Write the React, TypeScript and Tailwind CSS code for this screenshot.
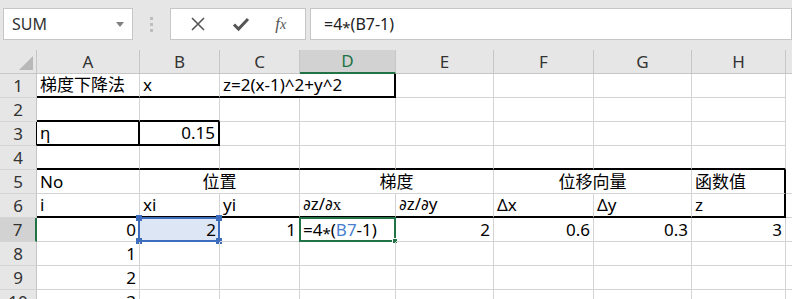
import React from 'react';

const FONT = '[font-family:"Noto_Sans","Noto_Sans_CJK_SC",sans-serif]';

type CellProps = {
  w: string;
  right?: boolean;
  center?: boolean;
  className?: string;
  children?: React.ReactNode;
};

function Cell({ w, right, center, className = '', children }: CellProps) {
  return (
    <div
      className={`${w} relative h-full shrink-0 border-r border-b border-[#d4d4d4] flex items-end px-[3px] pb-[1px] leading-[20px] whitespace-nowrap text-[17px] text-black ${
        right ? 'justify-end' : center ? 'justify-center' : 'justify-start'
      } ${className}`}
    >
      {children}
    </div>
  );
}

function RowHead({ n, active, className = '' }: { n: number; active?: boolean; className?: string }) {
  return (
    <div
      className={`w-[37px] h-full shrink-0 flex items-center justify-center text-[17px] text-[#333] border-b border-[#d4d4d4] ${
        active ? 'bg-[#d2d2d2] border-r-2 border-r-[#217346]' : 'bg-[#e6e6e6] border-r border-r-[#c6c6c6]'
      } ${className}`}
    >
      {n}
    </div>
  );
}

function Row({ children }: { children: React.ReactNode }) {
  return <div className="flex h-[24px] bg-white">{children}</div>;
}

const A = 'w-[103px]';
const B = 'w-[80px]';
const C = 'w-[80px]';
const D = 'w-[96px]';
const E = 'w-[98px]';
const F = 'w-[100px]';
const G = 'w-[98px]';
const H = 'w-[94px]';
const I = 'w-[30px]';

const THICK_B = 'border-b-2 border-b-black';
const THICK_R = 'border-r-2 border-r-black';

function EmptyRest({ from = 0, bottom = '' }: { from?: number; bottom?: string }) {
  const cols = [A, B, C, D, E, F, G, H];
  return (
    <>
      {cols.slice(from).map((c, i) => (
        <Cell key={i} w={c} className={bottom} />
      ))}
    </>
  );
}

function Handle({ className }: { className: string }) {
  return <div className={`absolute w-[6px] h-[6px] ${className}`} />;
}

// low-set asterisk the way the sheet font draws it
function Star() {
  return <span className="inline-block translate-y-[3px] text-[15px]">*</span>;
}

function Del() {
  return <span className="[font-family:'DejaVu_Sans',sans-serif] italic text-[15px]">∂</span>;
}

function Partial({ v }: { v: string }) {
  return (
    <span>
      <Del />z/<Del />
      {v === 'x' ? <span className="[font-family:'Liberation_Serif',serif]">x</span> : v}
    </span>
  );
}

export default function App() {
  return (
    <div className={`w-[792px] h-[299px] overflow-hidden bg-[#e6e6e6] ${FONT}`}>
      {/* formula bar */}
      <div className="h-[50px] flex items-start pt-[8px] pl-[3px]">
        <div className="w-[130px] h-[32px] bg-white border border-[#c6c6c6] flex items-center justify-between pl-[8px] pr-[8px]">
          <span className="text-[16px] text-[#333]">SUM</span>
          <svg width="8" height="5" viewBox="0 0 8 5">
            <path d="M0 0 L8 0 L4 5 Z" fill="#808080" />
          </svg>
        </div>
        <div className="w-[37px] h-[32px] flex flex-col items-center justify-center gap-[3px]">
          <div className="w-[3px] h-[3px] bg-[#bdbdbd]" />
          <div className="w-[3px] h-[3px] bg-[#bdbdbd]" />
          <div className="w-[3px] h-[3px] bg-[#bdbdbd]" />
        </div>
        <div className="w-[136px] h-[32px] bg-white border border-[#c6c6c6] flex items-center justify-around px-[6px]">
          <svg width="16" height="16" viewBox="0 0 16 16">
            <path d="M2 2 L14 14 M14 2 L2 14" stroke="#555" strokeWidth="1.6" />
          </svg>
          <svg width="18" height="16" viewBox="0 0 18 16">
            <path d="M2 8.5 L6.5 13 L16 3" stroke="#555" strokeWidth="3" fill="none" />
          </svg>
          <span className="[font-family:'Liberation_Serif',serif] italic text-[17px] text-[#555]">
            f<span className="text-[14px]">x</span>
          </span>
        </div>
        <div className="flex-1 ml-[4px] h-[32px] bg-white border border-[#c6c6c6] flex items-center pl-[13px]">
          <span className="text-[16px] text-[#222]">
            =4<Star />(B7-1)
          </span>
        </div>
      </div>

      {/* column headers */}
      <div className="flex h-[24px] text-[17px] text-[#333]">
        <div className="w-[37px] h-full shrink-0 border-r border-b border-[#c6c6c6] flex items-end justify-end p-[3px]">
          <svg width="14" height="14" viewBox="0 0 14 14">
            <path d="M14 0 L14 14 L0 14 Z" fill="#b8b8b8" />
          </svg>
        </div>
        {[
          [A, 'A'],
          [B, 'B'],
          [C, 'C'],
        ].map(([w, l]) => (
          <div key={l} className={`${w} h-full shrink-0 flex items-center justify-center border-r border-b border-[#c6c6c6]`}>
            {l}
          </div>
        ))}
        <div className={`${D} h-full shrink-0 flex items-center justify-center bg-[#d2d2d2] border-r border-r-[#c6c6c6] border-b-2 border-b-[#217346] text-[#217346]`}>
          D
        </div>
        {[
          [E, 'E'],
          [F, 'F'],
          [G, 'G'],
          [H, 'H'],
          [I, ''],
        ].map(([w, l], i) => (
          <div key={i} className={`${w} h-full shrink-0 flex items-center justify-center border-r border-b border-[#c6c6c6]`}>
            {l}
          </div>
        ))}
      </div>

      {/* row 1 */}
      <Row>
        <RowHead n={1} />
        <Cell w={A} className={THICK_B}>梯度下降法</Cell>
        <Cell w={B} className={THICK_B}>x</Cell>
        <Cell w={C} className={`${THICK_B} border-r-0`}>z=2(x-1)^2+y^2</Cell>
        <Cell w={D} className={`${THICK_B} ${THICK_R}`} />
        <EmptyRest from={4} />
      </Row>

      {/* row 2 */}
      <Row>
        <RowHead n={2} />
        <Cell w={A} className={THICK_B} />
        <Cell w={B} className={THICK_B} />
        <EmptyRest from={2} />
      </Row>

      {/* row 3 */}
      <Row>
        <RowHead n={3} className="border-r-black" />
        <Cell w={A} className={`${THICK_B} ${THICK_R}`}>η</Cell>
        <Cell w={B} right className={`${THICK_B} ${THICK_R}`}>0.15</Cell>
        <EmptyRest from={2} />
      </Row>

      {/* row 4 */}
      <Row>
        <RowHead n={4} />
        <EmptyRest bottom={THICK_B} />
      </Row>

      {/* row 5 */}
      <Row>
        <RowHead n={5} />
        <Cell w={A}>No</Cell>
        <Cell w="w-[160px]" center>位置</Cell>
        <Cell w="w-[194px]" center>梯度</Cell>
        <Cell w="w-[198px]" center>位移向量</Cell>
        <Cell w={H} className={THICK_R}>函数值</Cell>
        <Cell w={I} />
      </Row>

      {/* row 6 */}
      <Row>
        <RowHead n={6} />
        <Cell w={A} className={THICK_B}>i</Cell>
        <Cell w={B} className={THICK_B}>xi</Cell>
        <Cell w={C} className={THICK_B}>yi</Cell>
        <Cell w={D} className={THICK_B}><Partial v="x" /></Cell>
        <Cell w={E} className={THICK_B}><Partial v="y" /></Cell>
        <Cell w={F} className={THICK_B}>Δx</Cell>
        <Cell w={G} className={THICK_B}>Δy</Cell>
        <Cell w={H} className={`${THICK_B} ${THICK_R}`}>z</Cell>
        <Cell w={I} />
      </Row>

      {/* row 7 */}
      <Row>
        <RowHead n={7} active />
        <Cell w={A} right>0</Cell>
        <Cell w={B} right className="bg-[#dde6f4]">
          <div className="absolute -left-[2px] -top-[1px] -right-[1px] -bottom-[1px] border-2 border-[#3e6cbd]" />
          <Handle className="-left-[4px] -top-[3px] bg-[#3e6cbd]" />
          <Handle className="-right-[3px] -top-[3px] bg-[#3e6cbd]" />
          <Handle className="-left-[4px] -bottom-[3px] bg-[#3e6cbd]" />
          <Handle className="-right-[3px] -bottom-[3px] bg-[#3e6cbd]" />
          <span className="relative">2</span>
        </Cell>
        <Cell w={C} right>1</Cell>
        <Cell w={D}>
          <div className="absolute -left-[1px] -top-[1px] -right-[1px] -bottom-[1px] border-2 border-[#217346]" />
          <Handle className="-right-[3px] -bottom-[3px] bg-[#217346] border border-white" />
          <span className="relative">
            =4<Star />(<span className="text-[#4a7fd0]">B7</span>-1)
          </span>
        </Cell>
        <Cell w={E} right>2</Cell>
        <Cell w={F} right>0.6</Cell>
        <Cell w={G} right>0.3</Cell>
        <Cell w={H} right>3</Cell>
        <Cell w={I} />
      </Row>

      {[8, 9, 10].map((n) => (
        <Row key={n}>
          <RowHead n={n} />
          <Cell w={A} right>{n - 7}</Cell>
          <EmptyRest from={1} />
          <Cell w={I} />
        </Row>
      ))}
    </div>
  );
}
